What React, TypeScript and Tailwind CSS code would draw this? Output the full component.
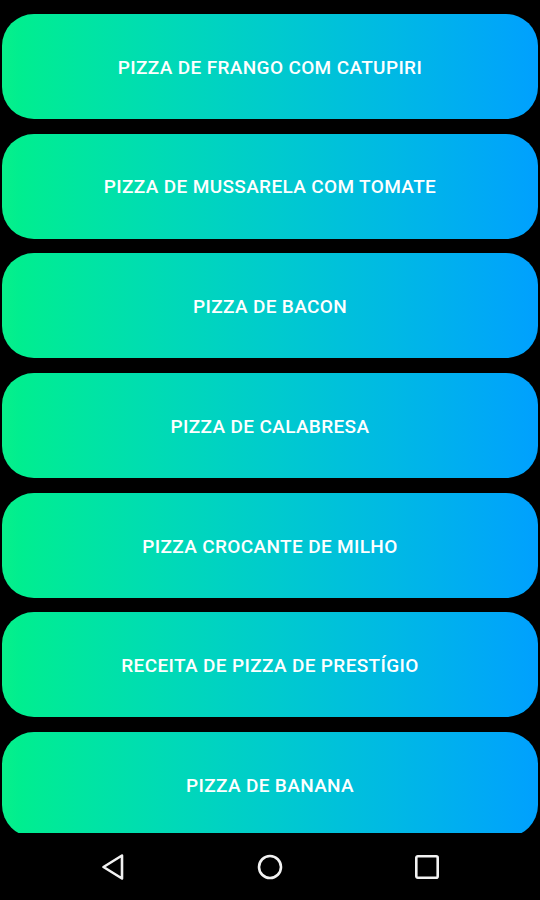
const pizzas = [
  'PIZZA DE FRANGO COM CATUPIRI',
  'PIZZA DE MUSSARELA COM TOMATE',
  'PIZZA DE BACON',
  'PIZZA DE CALABRESA',
  'PIZZA CROCANTE DE MILHO',
  'RECEITA DE PIZZA DE PRESTÍGIO',
  'PIZZA DE BANANA',
];

const NavBar = () => {
  return (
    <nav className="flex h-[67px] items-center justify-between bg-black pl-[100px] pr-[99px]">
      {/* back */}
      <svg width="26" height="28" viewBox="0 0 26 28" fill="none">
        <path
          d="M22 2.5 L3.5 14 L22 25.5 Z"
          stroke="#f2f2f2"
          strokeWidth="2.6"
          strokeLinejoin="round"
        />
      </svg>
      {/* home */}
      <svg width="28" height="28" viewBox="0 0 28 28" fill="none">
        <circle cx="14" cy="14" r="11" stroke="#f2f2f2" strokeWidth="2.6" />
      </svg>
      {/* recents */}
      <svg width="28" height="28" viewBox="0 0 28 28" fill="none">
        <rect
          x="3.3"
          y="3.3"
          width="21.4"
          height="21.4"
          rx="1.5"
          stroke="#f2f2f2"
          strokeWidth="2.6"
        />
      </svg>
    </nav>
  );
};

export default function App() {
  return (
    <div className="flex h-[900px] w-[540px] flex-col bg-black font-['Roboto',sans-serif]">
      <main className="flex h-[833px] flex-col gap-[14.7px] overflow-hidden px-[2px] pt-[14px]">
        {pizzas.map((name) => (
          <button
            key={name}
            className="flex h-[105px] w-full shrink-0 items-center justify-center rounded-[32px] bg-gradient-to-r from-[#08f08a] to-[#00a0fe] pt-[3px] text-[19px] font-medium tracking-[0.35px] text-white"
          >
            {name}
          </button>
        ))}
      </main>
      <NavBar />
    </div>
  );
}
